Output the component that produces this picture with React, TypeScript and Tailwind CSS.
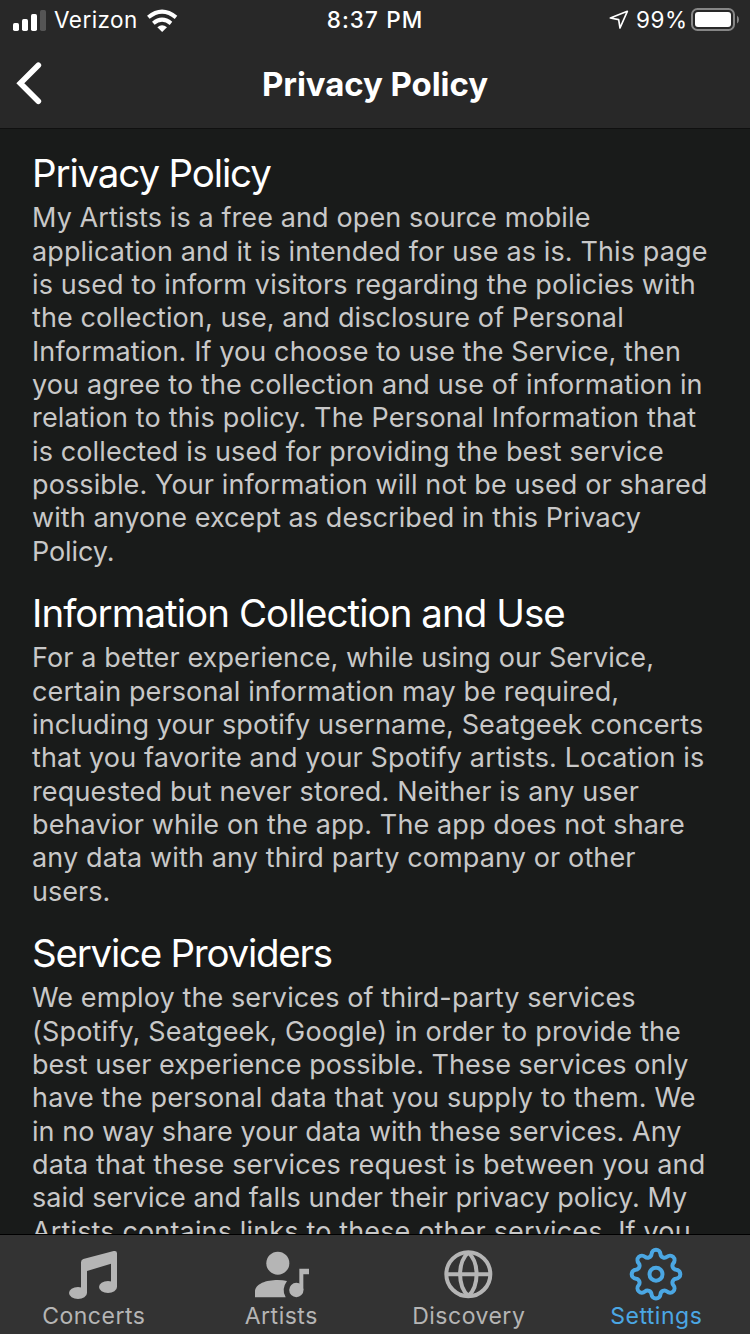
import React from "react";

type Line = [text: string, tracking: string];

const sections: { title: string; tracking: string; lines: Line[] }[] = [
  {
    title: "Privacy Policy",
    tracking: "tracking-[-1.15px]",
    lines: [
      ["My Artists is a free and open source mobile", "tracking-[0.11px]"],
      ["application and it is intended for use as is. This page", "tracking-[0.12px]"],
      ["is used to inform visitors regarding the policies with", "tracking-[0.13px]"],
      ["the collection, use, and disclosure of Personal", "tracking-[0.1px]"],
      ["Information. If you choose to use the Service, then", "tracking-[0.1px]"],
      ["you agree to the collection and use of information in", "tracking-[0.13px]"],
      ["relation to this policy. The Personal Information that", "tracking-[0.17px]"],
      ["is collected is used for providing the best service", "tracking-[0.12px]"],
      ["possible. Your information will not be used or shared", "tracking-[0.11px]"],
      ["with anyone except as described in this Privacy", "tracking-[0.07px]"],
      ["Policy.", "tracking-[-0.1px]"],
    ],
  },
  {
    title: "Information Collection and Use",
    tracking: "tracking-[-0.95px]",
    lines: [
      ["For a better experience, while using our Service,", "tracking-[0.1px]"],
      ["certain personal information may be required,", "tracking-[0.12px]"],
      ["including your spotify username, Seatgeek concerts", "tracking-[0.12px]"],
      ["that you favorite and your Spotify artists. Location is", "tracking-[0.14px]"],
      ["requested but never stored. Neither is any user", "tracking-[0.15px]"],
      ["behavior while on the app. The app does not share", "tracking-[0.12px]"],
      ["any data with any third party company or other", "tracking-[0.13px]"],
      ["users.", "tracking-[0.05px]"],
    ],
  },
  {
    title: "Service Providers",
    tracking: "tracking-[-1.25px]",
    lines: [
      ["We employ the services of third-party services", "tracking-[0.1px]"],
      ["(Spotify, Seatgeek, Google) in order to provide the", "tracking-[0.16px]"],
      ["best user experience possible. These services only", "tracking-[0.04px]"],
      ["have the personal data that you supply to them. We", "tracking-[0.18px]"],
      ["in no way share your data with these services. Any", "tracking-[0.04px]"],
      ["data that these services request is between you and", "tracking-[0.14px]"],
      ["said service and falls under their privacy policy. My", "tracking-[0.02px]"],
      ["Artists contains links to these other services. If you", "tracking-[0.15px]"],
    ],
  },
];

function StatusBar() {
  return (
    <div className="grid h-10 grid-cols-3 items-center text-[22.5px] leading-10">
      <div className="flex items-center pl-[13px]">
        <svg className="h-[21px] w-[33px]" viewBox="0 0 33 21" fill="currentColor">
          <rect x="0" y="13" width="6" height="8" rx="1.7" />
          <rect x="9" y="9" width="6" height="12" rx="1.7" />
          <rect x="18" y="4" width="6" height="17" rx="1.7" />
          <rect x="27" y="0" width="6" height="21" rx="1.7" fill="#555" />
        </svg>
        <span className="ml-[8px] w-[85px] tracking-[0.45px]">Verizon</span>
        <svg className="ml-[8px] h-[23px] w-[31px]" viewBox="442 25 93 69">
          <path d="M446 50Q487 16 529 50" fill="none" stroke="currentColor" strokeWidth="12" />
          <path d="M461 68Q487 46 514 68" fill="none" stroke="currentColor" strokeWidth="12" />
          <path d="M473 80Q487 68 502 80L487.500 94Z" fill="currentColor" />
        </svg>
      </div>
      <div className="text-center text-[22.5px] font-medium tracking-[1.1px]">8:37 PM</div>
      <div className="flex items-center justify-end pr-[10px]">
        <svg className="h-[20px] w-[20px]" viewBox="55 34 60 60" fill="none" stroke="currentColor" strokeWidth="5" strokeLinejoin="round">
          <path d="M59 58L110 38L88 88L84 63Z" />
        </svg>
        <span className="ml-[7px] w-[52px] whitespace-nowrap tracking-[0.6px]">99%</span>
        <svg className="ml-[3px] h-[24px] w-[49px]" viewBox="0 0 49 24">
          <rect x="1" y="1" width="42" height="21" rx="5.500" fill="none" stroke="#868686" strokeWidth="2" />
          <rect x="4" y="4" width="36" height="15" rx="3" fill="currentColor" />
          <path d="M46 7.500Q48 9 48 11.500T46 15.500Z" fill="#868686" />
        </svg>
      </div>
    </div>
  );
}

function NavBar() {
  return (
    <div className="grid h-[88px] grid-cols-[80px_1fr_80px] items-center">
      <svg className="ml-[13px] h-[50px] w-[32px]" viewBox="39 177 96 150" fill="none" stroke="currentColor" strokeWidth="17" strokeLinecap="round" strokeLinejoin="miter">
        <path d="M115 196L61 250L115 304" />
      </svg>
      <h1 className="text-center text-[33px] leading-[40px] font-bold tracking-[-0.08px]">Privacy Policy</h1>
    </div>
  );
}

function Tab({ label, viewBox, active, children }: { label: string; viewBox: string; active?: boolean; children: React.ReactNode }) {
  return (
    <div className={`flex flex-col items-center pt-[10px] ${active ? "text-[#4ba7e3]" : "text-[#b5b5b5]"}`}>
      <svg className="h-[60px] w-[60px]" viewBox={viewBox} fill="currentColor">
        {children}
      </svg>
      <span className="-mt-[3px] text-[23px] leading-7 tracking-[0.5px]">{label}</span>
    </div>
  );
}

function TabBar() {
  return (
    <nav className="grid h-[100px] shrink-0 grid-cols-4 border-t border-black bg-[#333]">
      <Tab label="Concerts" viewBox="132 60 180 180">
        <path d="M183 112Q183 105 190 102L281 78Q291 76 291 85V186H273V116L201 138V204H183Z" />
        <ellipse cx="174" cy="204" rx="27" ry="18" />
        <ellipse cx="264" cy="186" rx="27" ry="18" />
      </Tab>
      <Tab label="Artists" viewBox="94 60 180 180">
        <circle cx="174.500" cy="114.500" r="34.500" />
        <path d="M106 217V201C106 176 140 165 174 165Q190 165 202 168Q184 193 198 217Z" />
        <circle cx="230" cy="195" r="21.500" />
        <path d="M239 131H268V148H251V195H239Z" />
      </Tab>
      <Tab label="Discovery" viewBox="116 60 180 180">
        <g fill="none" stroke="currentColor" strokeWidth="12">
          <circle cx="204" cy="147.500" r="66" />
          <path d="M138 147.500H270M204 82C171 113 171 182 204 213M204 82C237 113 237 182 204 213" />
        </g>
      </Tab>
      <Tab label="Settings" viewBox="108 60 180 180" active>
        <g transform="translate(198 147.500) scale(3)" fill="none" stroke="currentColor" strokeWidth="4">
          <circle r="6.500" />
          <path d="M-4.490-20.130A4.500 4.500 0 0 1 4.490-20.130A4 4 0 0 0 11.060-17.410A4.500 4.500 0 0 1 17.410-11.060A4 4 0 0 0 20.130-4.490A4.500 4.500 0 0 1 20.130 4.490A4 4 0 0 0 17.410 11.060A4.500 4.500 0 0 1 11.060 17.410A4 4 0 0 0 4.490 20.130A4.500 4.500 0 0 1-4.490 20.130A4 4 0 0 0-11.060 17.410A4.500 4.500 0 0 1-17.410 11.060A4 4 0 0 0-20.130 4.490A4.500 4.500 0 0 1-20.130-4.490A4 4 0 0 0-17.410-11.060A4.500 4.500 0 0 1-11.060-17.410A4 4 0 0 0-4.490-20.130Z" />
        </g>
      </Tab>
    </nav>
  );
}

export default function App() {
  return (
    <div className="flex h-[1334px] w-[750px] flex-col overflow-hidden bg-[#191b1a] font-['Inter',sans-serif] text-white">
      <header className="h-[129px] shrink-0 border-b border-[#101010] bg-[#282828]">
        <StatusBar />
        <NavBar />
      </header>
      <main className="min-h-0 flex-1 overflow-hidden pt-[20px] pl-8">
        {sections.map((s) => (
          <section key={s.title} className="mb-[21.1px]">
            <h2 className={`h-[52.3px] text-[38.500px] leading-[48px] whitespace-nowrap ${s.tracking}`}>{s.title}</h2>
            <div className="text-[27px] leading-[33.33px] text-[#c8c8c8]">
              {s.lines.map(([text, tracking]) => (
                <p key={text} className={`whitespace-nowrap ${tracking}`}>{text}</p>
              ))}
            </div>
          </section>
        ))}
      </main>
      <TabBar />
    </div>
  );
}
